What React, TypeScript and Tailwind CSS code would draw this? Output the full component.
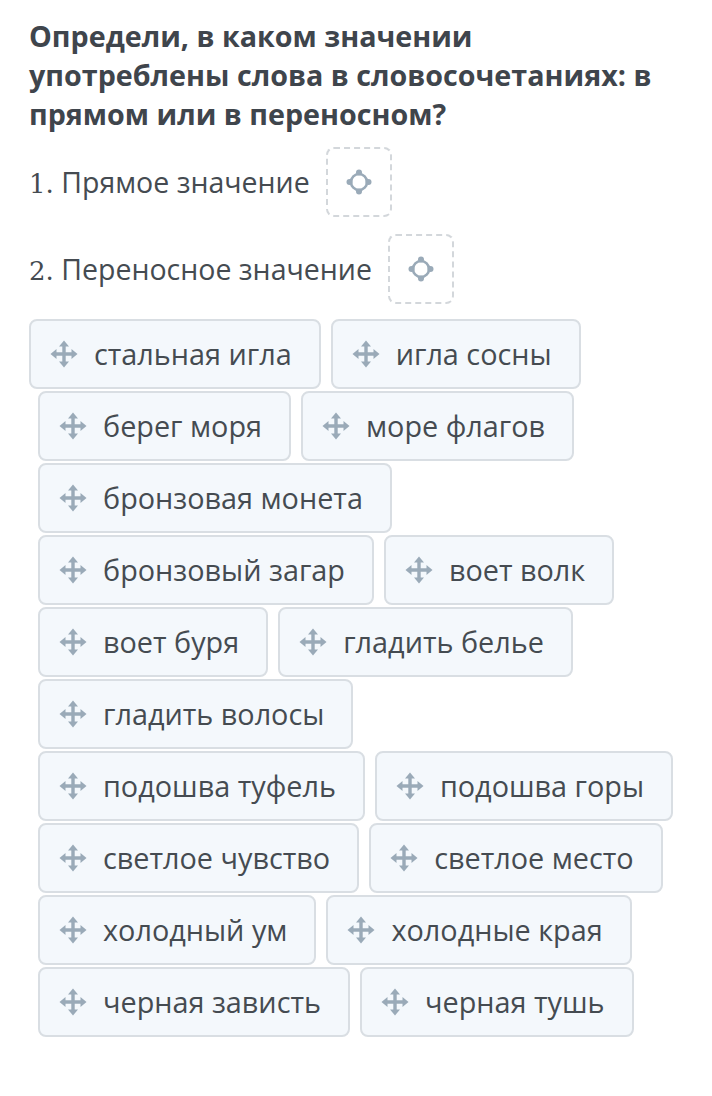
import React from "react";

const MoveIcon = () => (
  <svg width="28" height="28" viewBox="0 0 28 28" className="shrink-0">
    <g fill="#9aaab8">
      <rect x="12.3" y="5" width="3.4" height="18" rx="1" />
      <rect x="5" y="12.3" width="18" height="3.4" rx="1" />
      <path d="M14 0.5 L19 6.5 L9 6.5 Z" />
      <path d="M14 27.5 L19 21.5 L9 21.5 Z" />
      <path d="M0.5 14 L6.5 9 L6.5 19 Z" />
      <path d="M27.5 14 L21.5 9 L21.5 19 Z" />
    </g>
  </svg>
);

const TargetIcon = () => (
  <svg width="28" height="28" viewBox="0 0 28 28">
    <circle cx="14" cy="14" r="8" fill="none" stroke="#9aaab8" strokeWidth="2.6" />
    <g fill="#9aaab8">
      <circle cx="14" cy="4.5" r="3" />
      <circle cx="14" cy="23.5" r="3" />
      <circle cx="4.5" cy="14" r="3" />
      <circle cx="23.5" cy="14" r="3" />
    </g>
  </svg>
);

const Chip = ({ text }: { text: string }) => (
  <div className="flex h-[70px] items-center gap-4 rounded-lg border-2 border-[#d9dee3] bg-[#f4f8fc] pl-[19px] pr-[27px]">
    <MoveIcon />
    <span className="text-[28.8px] leading-none text-[#454b51] whitespace-nowrap">{text}</span>
  </div>
);

const rows: string[][] = [
  ["стальная игла", "игла сосны"],
  ["берег моря", "море флагов"],
  ["бронзовая монета"],
  ["бронзовый загар", "воет волк"],
  ["воет буря", "гладить белье"],
  ["гладить волосы"],
  ["подошва туфель", "подошва горы"],
  ["светлое чувство", "светлое место"],
  ["холодный ум", "холодные края"],
  ["черная зависть", "черная тушь"],
];

const DropBox = () => (
  <div className="flex h-[70px] w-[66px] items-center justify-center rounded-lg border-2 border-dashed border-[#d3d7db] bg-white">
    <TargetIcon />
  </div>
);

export default function App() {
  return (
    <div
      className="min-h-[1096px] w-[712px] bg-white pl-[29px] pt-[16px]"
      style={{ fontFamily: '"Open Sans", "Noto Sans", sans-serif' }}
    >
      <h1 className="text-[28.7px] font-bold leading-[39px] text-[#3f454c] whitespace-nowrap">
        Определи, в каком значении
        <br />
        употреблены слова в словосочетаниях: в
        <br />
        прямом или в переносном?
      </h1>
      <div className="mt-[14px] flex flex-col gap-[17px]">
        <div className="flex items-center gap-[16px]">
          <span className="text-[28.5px] text-[#454b51]">
            <span style={{ fontFamily: '"DejaVu Serif", serif' }} className="text-[26px]">1.</span> Прямое значение
          </span>
          <DropBox />
        </div>
        <div className="flex items-center gap-[16px]">
          <span className="text-[28.5px] text-[#454b51]">
            <span style={{ fontFamily: '"DejaVu Serif", serif' }} className="text-[26px]">2.</span> Переносное значение
          </span>
          <DropBox />
        </div>
      </div>
      <div className="mt-[15px] flex flex-col gap-[2px]">
        {rows.map((r, i) => (
          <div key={i} className={`flex gap-[10px] ${i === 0 ? "" : "pl-[9px]"}`}>
            {r.map((t) => (
              <Chip key={t} text={t} />
            ))}
          </div>
        ))}
      </div>
    </div>
  );
}
